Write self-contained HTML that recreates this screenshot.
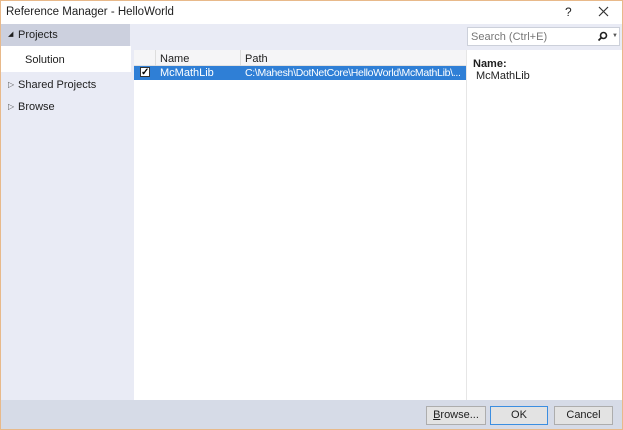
<!DOCTYPE html>
<html><head><style>
*{margin:0;padding:0;box-sizing:border-box}
body{width:623px;height:430px;overflow:hidden;font-family:"Liberation Sans",sans-serif;font-size:11px;color:#1e1e1e;background:#fff;position:relative}
.win{position:absolute;left:0;top:0;width:623px;height:430px;border:1px solid #e8b98a}
.abs{position:absolute}
</style></head><body>
<div class="win"></div>
<div class="abs" style="left:6px;top:6px;font-size:11.5px">Reference Manager - HelloWorld</div>
<div class="abs" style="left:565px;top:5px;font-size:12px">?</div>
<svg class="abs" style="left:598px;top:6px" width="11" height="11"><path d="M1 1L10 10M10 1L1 10" stroke="#333" stroke-width="1.2"/></svg>
<!-- left panel -->
<div class="abs" style="left:1px;top:24px;width:130px;height:376px;background:#e9ebf5"></div>
<div class="abs" style="left:1px;top:24px;width:129px;height:22px;background:#ccd0de"></div>
<div class="abs" style="left:1px;top:46px;width:130px;height:26px;background:#fff"></div>
<div class="abs" style="left:8px;top:30px;font-size:7px">◢</div>
<div class="abs" style="left:18px;top:29px;font-size:11px">Projects</div>
<div class="abs" style="left:25px;top:54px">Solution</div>
<div class="abs" style="left:8px;top:80px;font-size:8px;color:#555">▷</div>
<div class="abs" style="left:18px;top:79px">Shared Projects</div>
<div class="abs" style="left:8px;top:102px;font-size:8px;color:#555">▷</div>
<div class="abs" style="left:18px;top:101px">Browse</div>
<!-- toolbar -->
<div class="abs" style="left:131px;top:24px;width:491px;height:26px;background:#e9ebf5"></div>
<div class="abs" style="left:467px;top:27px;width:153px;height:19px;background:#fff;border:1px solid #ccd0da"></div>
<div class="abs" style="left:471px;top:31px;color:#777">Search (Ctrl+E)</div>
<svg class="abs" style="left:597px;top:31px" width="11" height="11"><circle cx="6.5" cy="4.5" r="3" fill="none" stroke="#222" stroke-width="1.6"/><path d="M4.5 6.5L1.5 9.5" stroke="#222" stroke-width="1.8"/></svg>
<div class="abs" style="left:612px;top:33px;font-size:6px;color:#555">▼</div>
<!-- grid -->
<div class="abs" style="left:131px;top:50px;width:3px;height:350px;background:#e9ebf5"></div>
<div class="abs" style="left:134px;top:50px;width:332px;height:350px;background:#fff"></div>
<div class="abs" style="left:134px;top:50px;width:332px;height:16px;background:#f5f5f7;border-bottom:1px solid #e2e2e2"></div>
<div class="abs" style="left:155px;top:50px;width:1px;height:16px;background:#ddd"></div>
<div class="abs" style="left:240px;top:50px;width:1px;height:16px;background:#ddd"></div>
<div class="abs" style="left:160px;top:53px">Name</div>
<div class="abs" style="left:245px;top:53px">Path</div>
<div class="abs" style="left:134px;top:66px;width:332px;height:14px;background:#2f7fd6"></div>
<div class="abs" style="left:140px;top:67px;width:10px;height:10px;background:#fff;border:1px solid #333;font-size:10px;line-height:9px;text-align:center;font-weight:bold;color:#000">✓</div>
<div class="abs" style="left:160px;top:67px;color:#fff">McMathLib</div>
<div class="abs" style="left:245px;top:67px;color:#fff;font-size:10.5px;width:218px;white-space:nowrap;overflow:hidden;letter-spacing:-0.3px">C:\Mahesh\DotNetCore\HelloWorld\McMathLib\...</div>
<!-- right panel -->
<div class="abs" style="left:466px;top:50px;width:1px;height:350px;background:#e6e6e6"></div>
<div class="abs" style="left:473px;top:58px;font-weight:bold">Name:</div>
<div class="abs" style="left:476px;top:70px">McMathLib</div>
<!-- bottom -->
<div class="abs" style="left:1px;top:400px;width:621px;height:29px;background:#d6dbe7"></div>
<div class="abs" style="left:426px;top:406px;width:60px;height:19px;background:#e3e3e3;border:1px solid #adadad;text-align:center;line-height:17px"><u>B</u>rowse...</div>
<div class="abs" style="left:490px;top:406px;width:58px;height:19px;background:#e3e3e3;border:1px solid #3c8ee0;text-align:center;line-height:17px">OK</div>
<div class="abs" style="left:554px;top:406px;width:59px;height:19px;background:#e3e3e3;border:1px solid #adadad;text-align:center;line-height:17px">Cancel</div>
</body></html>
